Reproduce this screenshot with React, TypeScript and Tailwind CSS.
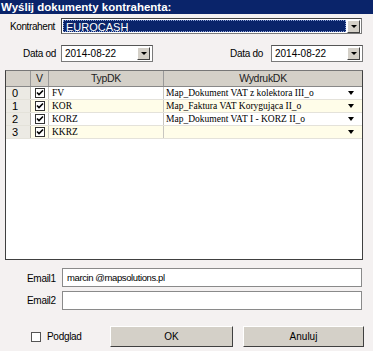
import React from 'react';

const rows = [
  { n: '0', typ: 'FV', wydruk: 'Map_Dokument VAT z kolektora III_o' },
  { n: '1', typ: 'KOR', wydruk: 'Map_Faktura VAT Korygująca II_o' },
  { n: '2', typ: 'KORZ', wydruk: 'Map_Dokument VAT I - KORZ II_o' },
  { n: '3', typ: 'KKRZ', wydruk: '' },
];

function DropBtn() {
  return (
    <div className="w-[13px] h-[13px] bg-[#d4d0c8] border-t border-l border-t-white border-l-white border-b border-r border-b-[#404040] border-r-[#404040] flex items-center justify-center">
      <div className="w-0 h-0 border-l-[3px] border-r-[3px] border-t-[3px] border-l-transparent border-r-transparent border-t-black" />
    </div>
  );
}

function Check() {
  return (
    <div className="w-[10px] h-[10px] bg-white border border-[#333] flex items-center justify-center">
      <svg width="8" height="8" viewBox="0 0 8 8">
        <path d="M1 3.5 L3 5.5 L7 1.5" stroke="black" strokeWidth="1.6" fill="none" />
      </svg>
    </div>
  );
}

function DateBox({ value }: { value: string }) {
  return (
    <div className="w-[92px] h-[17px] bg-white border border-[#7a7a7a] border-t-[#555] flex items-center justify-between pl-[3px] pr-[2px]">
      <span className="text-[10px] leading-none">{value}</span>
      <DropBtn />
    </div>
  );
}

export default function App() {
  return (
    <div className="w-[373px] h-[351px] bg-[#f4f1f1] text-black font-['Liberation_Sans',sans-serif] text-[10px] overflow-hidden">
      {/* title */}
      <div className="h-[14px] bg-[#0a246a] text-white font-bold text-[11.5px] leading-[14px] pl-[1px]">
        Wyślij dokumenty kontrahenta:
      </div>

      {/* kontrahent */}
      <div className="flex items-center h-[16px] mt-[4px]">
        <span className="w-[61px] pl-[10px] tracking-[-0.4px]">Kontrahent</span>
        <div className="w-[301px] h-[16px] bg-white border border-[#7a7a7a] border-t-[#444] border-l-[#444] flex items-center p-[1px] gap-[1px]">
          <div className="flex-1 h-full bg-[#0a246a] text-white text-[11px] leading-[12px] pl-[2px] border border-dotted border-[#8da2d8]">
            EUROCASH
          </div>
          <DropBtn />
        </div>
      </div>

      {/* dates */}
      <div className="flex items-center h-[17px] mt-[11px]">
        <span className="w-[61px] pl-[23px] tracking-[-0.3px]">Data od</span>
        <DateBox value="2014-08-22" />
        <span className="w-[118px] text-right pr-[8px] tracking-[-0.3px]">Data do</span>
        <DateBox value="2014-08-22" />
      </div>

      {/* grid */}
      <div className="ml-[5px] mt-[8px] w-[358px] h-[190px] bg-white border border-[#404040] border-t-[#777]">
        <div className="flex h-[16px] bg-[#d4d0c8] border-b border-[#888] text-[10.5px] leading-[15px] text-[#222]">
          <div className="w-[25px] border-r border-[#999]" />
          <div className="w-[18px] border-r border-[#999] text-center">V</div>
          <div className="w-[115px] border-r border-[#999] text-center tracking-[-0.3px]">TypDK</div>
          <div className="flex-1 text-center tracking-[-0.3px]">WydrukDK</div>
        </div>
        {rows.map((r, i) => (
          <div
            key={r.n}
            className={`flex h-[13px] border-b border-[#e4e2da] ${i % 2 === 1 ? 'bg-[#fffde9]' : 'bg-white'}`}
          >
            <div className="w-[25px] border-r border-[#b0ada5] bg-[#eceae4] text-[11px] leading-[13px] pl-[6px]">{r.n}</div>
            <div className="w-[18px] border-r border-[#c8c6c0] flex items-center justify-center">
              <Check />
            </div>
            <div className="w-[115px] border-r border-[#c8c6c0] pl-[3px] font-['Liberation_Serif',serif] text-[9.5px] leading-[13px]">{r.typ}</div>
            <div className="flex-1 flex items-center justify-between pl-[2px] pr-[8px] font-['Liberation_Serif',serif] text-[9.5px] leading-[13px]">
              <span>{r.wydruk}</span>
              <div className="w-0 h-0 border-l-[3.5px] border-r-[3.5px] border-t-[4px] border-l-transparent border-r-transparent border-t-black" />
            </div>
          </div>
        ))}
      </div>

      {/* emails */}
      <div className="flex items-center h-[19px] mt-[8px]">
        <span className="w-[62px] pl-[27px] tracking-[-0.3px] self-start pt-[3px]">Email1</span>
        <div className="w-[300px] h-[19px] bg-white border border-[#8a8a8a] text-[9.5px] leading-[17px] pl-[4px] tracking-[-0.4px]">
          marcin @mapsolutions.pl
        </div>
      </div>
      <div className="flex items-center h-[19px] mt-[4px]">
        <span className="w-[62px] pl-[27px] tracking-[-0.3px] self-start pt-[2px]">Email2</span>
        <div className="w-[300px] h-[19px] bg-white border border-[#8a8a8a]" />
      </div>

      {/* bottom */}
      <div className="flex items-center h-[21px] mt-[16px]">
        <div className="flex items-center w-[110px] pl-[31px] gap-[6px]">
          <div className="w-[10px] h-[10px] bg-white border border-[#555]" />
          <span className="tracking-[-0.3px]">Podglad</span>
        </div>
        <button className="w-[123px] h-[21px] bg-[#d4d0c8] border border-t-white border-l-white border-b-[#404040] border-r-[#404040] text-[10px]">
          OK
        </button>
        <button className="ml-[10px] w-[121px] h-[21px] bg-[#d4d0c8] border border-t-white border-l-white border-b-[#404040] border-r-[#404040] text-[10px]">
          Anuluj
        </button>
      </div>
    </div>
  );
}
